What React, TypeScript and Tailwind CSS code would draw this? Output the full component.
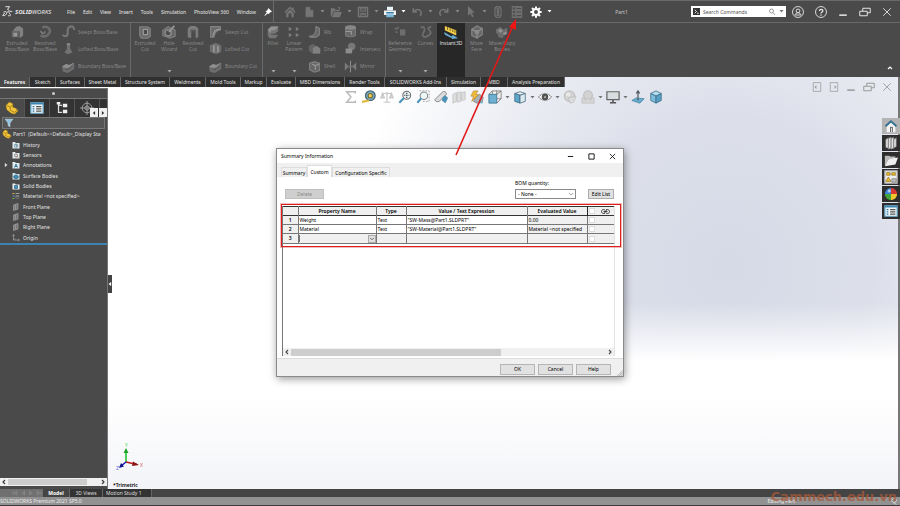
import React from "react";

type IconProps = { className?: string; children?: React.ReactNode };

const Svg = ({ className = "size-3", children }: IconProps) => (
  <svg
    viewBox="0 0 16 16"
    className={`${className} shrink-0`}
    fill="none"
    stroke="currentColor"
    strokeWidth="1.4"
    aria-hidden="true"
  >
    {children}
  </svg>
);

const Caret = ({ className = "text-neutral-500" }: { className?: string }) => (
  <svg viewBox="0 0 5 3" className={`w-[5px] h-[3px] shrink-0 ${className}`} aria-hidden="true">
    <path d="M0.5 0h4L2.5 2.6z" fill="currentColor" />
  </svg>
);

const icons: Record<string, React.ReactNode> = {
  home: (
    <g fill="currentColor" stroke="none">
      <path d="M8 0.500L0.500 8 2 9.300l6-6 6 6L15.500 8 13 5.500V2h-2v1.500z" />
      <path d="M3 9.500 8 4.800l5 4.700V15h-3v-5H6v5H3z" />
    </g>
  ),
  doc: <path d="M3 1h7l4 4v10H3zM10 1v4h4" fill="currentColor" stroke="#4a4a4a" strokeWidth="0.600" />,
  open: (
    <g fill="currentColor" stroke="none">
      <path d="M1 3h5l1 2h6v2H5l-3 7H1z" />
      <path d="M5.500 8H16l-3 7H2.500z" />
      <path d="M10 1l4 1-1 3z" />
    </g>
  ),
  save: (
    <g>
      <path d="M2 2h12v12H2z" strokeWidth="2" />
      <path d="M5 2v5h6V2M5 14v-4h6v4" />
      <path d="M6 11h4M6 4h4" />
    </g>
  ),
  print: (
    <g stroke="none">
      <path d="M4 1h8v5H4z" fill="#e9f4fa" />
      <path d="M0 6h16v6H0z" fill="#f1f1f1" />
      <path d="M3 8h10v2H3z" fill="#2c7fae" />
      <path d="M3 11h10v4H3z" fill="#79b9da" />
    </g>
  ),
  undo: <path d="M3 3v5h5M3.500 7.500C6 4 11 4 13 7c1 2 1 4-1 6" strokeWidth="2" />,
  redo: <path d="M13 3v5H8M12.500 7.500C10 4 5 4 3 7c-1 2-1 4 1 6" strokeWidth="2" />,
  cursor: <path d="M4 0l9 9H9l2.500 5-2 1L7 10l-3 3z" fill="currentColor" stroke="none" />,
  traffic: (
    <g>
      <rect x="4" y="0.800" width="8" height="14.400" rx="3.500" />
      <circle cx="8" cy="4.500" r="1.500" />
      <circle cx="8" cy="8" r="1" />
      <circle cx="8" cy="11.500" r="1.500" />
    </g>
  ),
  list: (
    <g stroke="none">
      <path d="M1 0h14v16H1z" fill="#6e6e6e" />
      <path d="M2.500 2h3v2.500h-3zM2.500 6.700h3v2.500h-3zM2.500 11.500h3V14h-3z" fill="#4d4d4d" />
      <path d="M7.500 2.500h6v1.500h-6zM7.500 7.200h6v1.500h-6zM7.500 12h6v1.500h-6z" fill="#4d4d4d" />
    </g>
  ),
  gear: (
    <g stroke="currentColor">
      <circle cx="8" cy="8" r="4" strokeWidth="2.800" />
      <path
        d="M8 0.500V3M8 13v2.500M0.500 8H3M13 8h2.500M2.700 2.700l1.800 1.800M11.500 11.500l1.800 1.800M13.300 2.700l-1.800 1.800M4.500 11.500l-1.800 1.800"
        strokeWidth="2.600"
      />
    </g>
  ),
  extrude: (
    <g stroke="none">
      <path d="M3 7l4-5 4-1 4 3v8l-4 3V7z" fill="#808080" />
      <path d="M2 7h8v7H2z" fill="#6a6a6a" />
      <path d="M4 9h4v4H4z" fill="#999" />
    </g>
  ),
  revolve: (
    <g>
      <path d="M5 3c6-3 10 2 8 6s-6 5-10 3" strokeWidth="3" stroke="#6c6c6c" />
      <path d="M3 7c2 4 5 3 5 0" stroke="#888" />
    </g>
  ),
  sweep: <path d="M1 12c2 3 6 2 6-2 0-3-1-7 3-8 3-1 5 1 5 4" stroke="#757575" strokeWidth="2.600" />,
  loft: (
    <g stroke="none">
      <path d="M6 2h4v6l3 5-6 2-4-2 3-4z" fill="#727272" />
      <path d="M6 1.500h4V4H6z" fill="#8a8a8a" />
    </g>
  ),
  boundary: (
    <g stroke="none">
      <path d="M0 8l5-3 4 1 6-3v8l-8 5-6-2z" fill="#6e6e6e" />
      <path d="M0 8l5-3 4 1 6-3-6 6-3 1z" fill="#8f8f8f" />
      <path d="M3 11l6-1 4-3v2l-6 4z" fill="#5a5a5a" />
    </g>
  ),
  cut: (
    <g>
      <path d="M2 2h9l3 2v9l-3 2H4l-2-3z" fill="#696969" stroke="#808080" />
      <path d="M6 5h5v6H6z" fill="#4a4a4a" stroke="#999" />
    </g>
  ),
  hole: (
    <g>
      <path d="M1 6l6-4 8 4v7l-6 2-8-3z" fill="#666" stroke="#7c7c7c" />
      <circle cx="7" cy="9" r="3.500" fill="#4c4c4c" stroke="#909090" />
      <path d="M8 8l6-7" stroke="#999" strokeWidth="2" />
    </g>
  ),
  revcut: (
    <g stroke="none">
      <path d="M2 14V4l3-3h6l3 3v10l-3 1V6H6v9z" fill="#7c7c7c" />
      <path d="M5 5h6l-1 8V7H6v6z" fill="#5b5b5b" />
    </g>
  ),
  sweptcut: (
    <g>
      <path d="M2 2h12v4c-5 0-7 3-8 9H2z" fill="#6a6a6a" stroke="#828282" />
      <path d="M5 14c0-6 3-9 9-9" stroke="#999" />
    </g>
  ),
  loftcut: (
    <g stroke="none">
      <path d="M1 4l7-3 7 3v8l-6 3-8-3z" fill="#6e6e6e" />
      <path d="M5 4h2v9H5zM10 5h2v8h-2z" fill="#999" />
    </g>
  ),
  fillet: (
    <g stroke="none">
      <path d="M2 5l4-4h8v6l-4 3H6v1h8l-3 4H4l-2-3z" fill="#757575" />
      <path d="M2 5l4-3h8l-4 4H6L5 9z" fill="#929292" />
    </g>
  ),
  pattern: (
    <g fill="#7c7c7c" stroke="none">
      <path d="M2 2l4 2.500L2 7zM10 2l4 2.500L10 7zM2 9l4 2.500L2 14zM10 9l4 2.500-4 2.500z" />
    </g>
  ),
  rib: <path d="M2 14c6 0 8-4 8-12l4 2v8l-4 3H3z" fill="#666" stroke="#828282" />,
  draft: (
    <g stroke="none">
      <path d="M1 5l5-3 9 6v6H6l-5-3z" fill="#646464" />
      <path d="M6 7l5-2 4 3v6H6z" fill="#808080" />
    </g>
  ),
  shell: (
    <g>
      <path d="M2 4l6-2 6 2v9l-6 2-6-3z" fill="#666" stroke="#828282" />
      <path d="M5 5l4 2v5M9 7l5-2" stroke="#999" />
    </g>
  ),
  wrap: (
    <g>
      <path d="M2 3v10c2 2 10 2 12 0V3" fill="#686868" stroke="#7c7c7c" />
      <ellipse cx="8" cy="3" rx="6" ry="2" fill="#858585" />
      <path d="M2 8h7v4" stroke="#999" />
    </g>
  ),
  intersect: (
    <g stroke="none">
      <circle cx="9.500" cy="5.500" r="4.500" fill="#777" />
      <path d="M2 8h8v6H2z" fill="#8c8c8c" />
    </g>
  ),
  mirror: (
    <g stroke="none">
      <path d="M1 3l5 5-5 5zM15 3l-5 5 5 5z" fill="#7c7c7c" />
      <path d="M7.400 1h1.200v14H7.400z" fill="#909090" />
      <path d="M3 7h10v2H3z" fill="#707070" />
    </g>
  ),
  refgeo: (
    <g fill="#6e6e6e" stroke="none">
      <path d="M8 5h6v7H8z" />
      <path d="M2 3h3v2H2zM3 7h2v2H3zM5 2h2v2H5z" />
    </g>
  ),
  curves: <path d="M2 3c5-3 5 3 3 6s0 6 4 4 6-4 3-7 0-4 2-4" strokeWidth="2" stroke="#6e6e6e" />,
  instant: (
    <g stroke="none">
      <path d="M1 1l13 5v6L1 6z" fill="#f5cf4c" />
      <path d="M4 2.500v3M7 3.700v3M10 5v3M12.500 6v3" stroke="#574719" strokeWidth="0.900" />
      <path d="M0 8l9 5 1-2 6 4-7 1v-1L1 11z" fill="#67acd3" />
    </g>
  ),
  moveface: (
    <g>
      <path d="M2 5l6-4 6 3v7l-6 4-6-3z" fill="#676767" stroke="#828282" />
      <path d="M2 5l6 3 6-4M8 8v7" stroke="#909090" />
      <circle cx="8" cy="8" r="2" fill="#888" />
    </g>
  ),
  movecopy: (
    <g stroke="none">
      <path d="M1 5l5-3 3 3 5-2v5l-4 3-1 4-5-1-1-4-2-1z" fill="#6c6c6c" />
      <path d="M3 6l4-2 2 3-3 2zM9 9l4-2 1 3-4 2z" fill="#8f8f8f" />
    </g>
  ),
  user: (
    <g strokeWidth="1.200">
      <circle cx="8" cy="8" r="7.300" />
      <circle cx="8" cy="6.500" r="2.500" />
      <path d="M4 12c1-4 7-4 8 0z" />
    </g>
  ),
  part: (
    <g>
      <path d="M1 5l4-4 4 2v4l3 1 3 3-4 4-4-1-5-4z" fill="#f2c63c" stroke="#8d6a12" strokeWidth="0.600" />
      <path d="M2 5l4 2v4M6 7l3-3M7 11l4 2 3-3" stroke="#9a7417" strokeWidth="1" />
    </g>
  ),
  property: (
    <g>
      <path d="M1 2h14v12H1z" fill="#f2f6f8" stroke="#6faed0" />
      <path d="M1 3h14" stroke="#3c86b2" strokeWidth="2" />
      <path d="M3 6.500h2M3 9h2M3 11.500h2" stroke="#2b7baa" />
      <path d="M7 6.500h6M7 9h6M7 11.500h6" stroke="#555" />
    </g>
  ),
  config: (
    <g>
      <path d="M4 1v12h4M4 5h4" stroke="#ddd" />
      <path d="M2 1h4v3H2zM9 3h5v4H9zM9 10h5v4H9z" fill="#eee" stroke="none" />
    </g>
  ),
  target: (
    <g stroke="#aaa" strokeWidth="1">
      <circle cx="8" cy="8" r="5.500" />
      <circle cx="8" cy="8" r="2.500" />
      <path d="M8 0v16M0 8h16" />
    </g>
  ),
  funnel: <path d="M2 2h12L9.500 8v6l-3-2V8z" fill="#8fc4e0" stroke="#d9eef8" strokeWidth="0.800" />,
  folder: (
    <g>
      <path d="M1 3h5l1.500 2H15v10H1z" fill="#edf1f3" stroke="none" />
      <path d="M5 7h6v6H5z" fill="#4b91b9" stroke="#24617f" />
    </g>
  ),
  history: (
    <g>
      <path d="M1 2h5l1.500 2H15v11H1z" fill="#e6ebee" stroke="none" />
      <circle cx="8" cy="9.500" r="3.500" fill="#fff" stroke="#397ea5" />
      <path d="M8 7v3h2" stroke="#333" />
    </g>
  ),
  sensors: (
    <g>
      <path d="M1 2h5l1.500 2H15v11H1z" fill="#e6ebee" stroke="none" />
      <circle cx="8" cy="9" r="3" fill="#fff" stroke="#555" />
      <path d="M8 9l4 4" stroke="#b9523c" />
    </g>
  ),
  annot: (
    <g>
      <path d="M1 2h5l1.500 2H15v11H1z" fill="#e6ebee" stroke="none" />
      <path d="M5 13l3-7 3 7M6 11h4" stroke="#246f99" strokeWidth="1.800" />
    </g>
  ),
  surface: (
    <g>
      <path d="M1 2h5l1.500 2H15v11H1z" fill="#c9dfe9" stroke="none" />
      <path d="M3 10c2-5 8-5 10 0-2 4-8 4-10 0z" fill="#438eb8" stroke="#174f6c" />
    </g>
  ),
  material: (
    <g strokeWidth="1.800">
      <path d="M1 3h4" stroke="#e9bc3c" />
      <path d="M1 8h4" stroke="#5aa5d0" />
      <path d="M1 13h4" stroke="#6fbb64" />
      <path d="M7 3h8M7 8h7" stroke="#aaa" />
      <path d="M7 10c2-2 6-2 7 0s-2 4-5 3z" stroke="#999" strokeWidth="1" />
    </g>
  ),
  plane: <path d="M3 4l9-3v11l-9 3zM7 3v10" fill="#777" stroke="#a5a5a5" />,
  origin: (
    <g stroke="#a5a5a5">
      <path d="M3 2v10h11M3 12l3-3" />
      <path d="M1 4l2-3 2 3M12 10l3 2-3 2" />
    </g>
  ),
  sigma: <path d="M13 4V2H3l5 6-5 6h10v-2" stroke="#b9b9b9" strokeWidth="1.600" />,
  measure: (
    <g>
      <circle cx="9.500" cy="6.500" r="5.500" fill="#72aecb" stroke="#46606c" />
      <circle cx="9.500" cy="6.500" r="2.500" fill="#f2d35e" stroke="#7b6b2c" />
      <path d="M0 13.500l8-1.500" stroke="#e0b93f" strokeWidth="2.500" />
    </g>
  ),
  scale: (
    <g stroke="#c7c7c7">
      <path d="M8 2v12M4 14h8M2 4h12" />
      <path d="M1 9l2-5 2 5zM11 9l2-5 2 5z" fill="#d9d9d9" />
    </g>
  ),
  zoomfit: (
    <g>
      <circle cx="10" cy="6" r="4.500" fill="#e9f4f9" stroke="#6c6c6c" strokeWidth="1.200" />
      <path d="M10 3v6M7 6h6" stroke="#444" strokeDasharray="1.500 1" />
      <path d="M6.500 9.500L1.500 14.500" stroke="#4a90b8" strokeWidth="2.400" />
    </g>
  ),
  zoomarea: (
    <g>
      <path d="M4 1h11v12H8" stroke="#999" strokeDasharray="2 1.500" strokeWidth="1" />
      <circle cx="9" cy="6.500" r="4.300" fill="#eef5f8" stroke="#888" strokeWidth="1.200" />
      <path d="M6 9.500L1.500 14.500" stroke="#4a90b8" strokeWidth="2.400" />
    </g>
  ),
  prev: (
    <g>
      <path d="M1 11l9-9c2-1 5 1 4 3l-8 8c-2 1-5 0-5-2z" fill="#dcdcdc" stroke="#777" strokeWidth="1" />
      <path d="M10 8l3-2 3 3-3 6-4-3z" fill="#4a90b8" stroke="none" />
    </g>
  ),
  section: (
    <g fill="#dedede" stroke="#c0c0c0" strokeWidth="0.900">
      <path d="M1 5l4-2v10l-4 2zM6 3l4-1v11l-4 1zM11 3l4-1v9l-4 1z" />
    </g>
  ),
  dynamic: (
    <g>
      <path d="M6 9l5-4 4 3-1 6-6 1-4-2z" fill="#a9b3b8" stroke="#777" strokeWidth="0.800" />
      <path d="M11 9l4 6H9z" fill="#6db0d1" stroke="none" />
      <path d="M4 1h5L6.500 5H10l-8 8 2-6H1z" fill="#f0bc40" stroke="#a87616" strokeWidth="0.600" />
    </g>
  ),
  orient: (
    <g>
      <path d="M5 1h10v9H5z" fill="#eee" stroke="#777" strokeWidth="0.900" />
      <path d="M1 5h9v10H1z" fill="#6db0d1" stroke="#356f8d" strokeWidth="0.900" />
      <path d="M1 5l4-4M10 5l5-4M10 15l5-5M10 1v4" stroke="#666" strokeWidth="0.900" />
    </g>
  ),
  display: (
    <g strokeWidth="0.900" stroke="#426a7e">
      <path d="M2 4l6-2 6 2-6 2z" fill="#f1f1f1" />
      <path d="M2 4l6 2v9l-6-2z" fill="#5da7cc" />
      <path d="M14 4L8 6v9l6-2z" fill="#dceaf1" />
    </g>
  ),
  eye: (
    <g>
      <path d="M0.500 8c4-5 11-5 15 0-4 5-11 5-15 0z" fill="#f5f5f5" stroke="#777" strokeWidth="1" />
      <circle cx="8" cy="8" r="3.200" fill="#555" stroke="#444" strokeWidth="1" />
      <circle cx="8" cy="8" r="1" fill="#ddd" stroke="none" />
    </g>
  ),
  ball: (
    <g>
      <circle cx="7.500" cy="7" r="6" fill="#d3d3d3" stroke="#c0c0c0" />
      <path d="M6 9l9-2-3 7-4 1z" fill="#dcdcdc" stroke="#bbb" strokeWidth="0.800" />
      <circle cx="6" cy="5" r="2.500" fill="#e8e8e8" stroke="none" />
    </g>
  ),
  scene: (
    <g>
      <circle cx="8" cy="6" r="5" fill="#d3d3d3" stroke="#c0c0c0" />
      <path d="M1 15V9h3l1 3 3-3 3 3 1-3h3v6z" fill="#d6d6d6" stroke="#bbb" strokeWidth="0.800" />
    </g>
  ),
  monitor: (
    <g>
      <path d="M1 2h14v9H1z" fill="#d8dde0" stroke="#666" />
      <path d="M8 11v3M4.500 14.500h7" stroke="#555" strokeWidth="1.800" />
    </g>
  ),
  plate: (
    <g>
      <path d="M1 12l5-3 9 1-5 5z" fill="#69aed0" stroke="#3b7c9d" strokeWidth="0.800" />
      <path d="M8 12V2M6 4l2-3 2 3" stroke="#4e5b61" />
    </g>
  ),
  cube: (
    <g stroke="#3a6f8c" strokeWidth="0.900">
      <path d="M2 4l6-3 6 3-6 3z" fill="#b6dbec" />
      <path d="M2 4l6 3v8l-6-3z" fill="#7dbcda" />
      <path d="M14 4L8 7v8l6-3z" fill="#5a9fc3" />
    </g>
  ),
  panehome: (
    <g stroke="none">
      <path d="M3 8l5-4 5 4v7H3z" fill="#f4f4f4" />
      <path d="M8 1L1 7.500 2.500 9 8 4l5.500 5L15 7.500z" fill="#34708f" />
      <path d="M7 9h3v6H7z" fill="#555" />
      <path d="M8 10h1v5H8z" fill="#eee" />
    </g>
  ),
  books: (
    <g stroke="#777" strokeWidth="0.700" fill="#e0e0e0">
      <path d="M2 4l3-2v12l-3-1zM5 3l3-2v13l-3 1zM8 3l3-2v13l-3 1zM11 4l3-2v10l-3 2z" />
    </g>
  ),
  panefolder: (
    <g stroke="none">
      <path d="M1 3h5l1 1h6v3H5l-3 7H1z" fill="#bbb" />
      <path d="M5 7l11-2-3 8-12 2z" fill="#efefef" />
    </g>
  ),
  palette: (
    <g>
      <path d="M1 1h14v14H1z" fill="#eee" stroke="#bbb" />
      <path d="M3 3h4v3H3zM9 3h4v3H9zM5 8l3 5H2z" fill="#e9bb2f" stroke="#85650f" strokeWidth="0.700" />
      <path d="M7 4.500h2M9 10h5v4H9z" fill="#bbb" stroke="#777" strokeWidth="0.800" />
    </g>
  ),
  appearance: (
    <g stroke="none">
      <path d="M8 8V1a7 7 0 0 0-7 7z" fill="#3d80d6" />
      <path d="M8 8V1a7 7 0 0 1 7 7z" fill="#da3833" />
      <path d="M8 8H1a7 7 0 0 0 7 7z" fill="#42a63e" />
      <path d="M8 8h7a7 7 0 0 1-7 7z" fill="#efc62e" />
      <circle cx="6" cy="4.500" r="1.800" fill="#fff" opacity="0.600" />
    </g>
  ),
};

const Icon = ({ name, className }: { name: string; className?: string }) => (
  <Svg className={className}>{icons[name]}</Svg>
);

const menus = ["File", "Edit", "View", "Insert", "Tools", "Simulation", "PhotoView 360", "Window"];

const quickActions = [
  { name: "doc", label: "New" },
  { name: "open", label: "Open" },
  { name: "save", label: "Save" },
  { name: "print", label: "Print", active: true },
  { name: "undo", label: "Undo" },
  { name: "redo", label: "Redo" },
  { name: "cursor", label: "Select" },
];

const tabs = [
  { label: "Features", width: "w-[30px]", active: true },
  { label: "Sketch", width: "w-[26px]" },
  { label: "Surfaces", width: "w-[29px]" },
  { label: "Sheet Metal", width: "w-[36px]" },
  { label: "Structure System", width: "w-[49px]" },
  { label: "Weldments", width: "w-[36px]" },
  { label: "Mold Tools", width: "w-[35px]" },
  { label: "Markup", width: "w-[26px]" },
  { label: "Evaluate", width: "w-[29px]" },
  { label: "MBD Dimensions", width: "w-[49px]" },
  { label: "Render Tools", width: "w-[40px]" },
  { label: "SOLIDWORKS Add-Ins", width: "w-[62px]" },
  { label: "Simulation", width: "w-[34px]" },
  { label: "MBD", width: "w-[27px]" },
  { label: "Analysis Preparation", width: "w-[57px]" },
];

const tree = [
  { label: "History", icon: "history" },
  { label: "Sensors", icon: "sensors" },
  { label: "Annotations", icon: "annot", expandable: true },
  { label: "Surface Bodies", icon: "surface" },
  { label: "Solid Bodies", icon: "folder" },
  { label: "Material <not specified>", icon: "material" },
  { label: "Front Plane", icon: "plane" },
  { label: "Top Plane", icon: "plane" },
  { label: "Right Plane", icon: "plane" },
  { label: "Origin", icon: "origin" },
];

const viewTools = [
  { name: "sigma" },
  { name: "measure" },
  { name: "scale" },
  { name: "zoomfit" },
  { name: "zoomarea" },
  { name: "prev" },
  { name: "section" },
  { name: "dynamic" },
  { name: "orient", menu: true },
  { name: "display", menu: true },
  { name: "eye", menu: true },
  { name: "ball" },
  { name: "scene", menu: true },
  { name: "monitor", menu: true },
  { name: "plate" },
  { name: "cube" },
];

const taskPane = ["panehome", "books", "panefolder", "palette", "appearance", "property"];

const properties = [
  { name: "Weight", type: "Text", value: '"SW-Mass@Part1.SLDPRT"', result: "0.00" },
  { name: "Material", type: "Text", value: '"SW-Material@Part1.SLDPRT"', result: "Material <not specified" },
];

const TitleBar = () => (
  <header className="h-[22px] flex items-center border-t border-[#6a6a6a] text-[#e8e8e8] shrink-0">
    <div className="w-[62px] pl-0.5 flex items-center gap-0.5 text-[6px] italic">
      <Svg className="w-[11px] h-[11px]">
        <path d="M5 1h6L8 5c3 0 3 3-1 4M2 9c4-2 6 0 4 3-1 2-3 2-5 2l3-4M15 8c-4-1-6 1-4 3s2 4-2 3" />
      </Svg>
      <span className="whitespace-nowrap">
        <b>SOLID</b>WORKS
      </span>
    </div>
    <nav className="w-[211px] pl-[5px] flex items-center gap-2">
      {menus.map((menu) => (
        <a key={menu} href="#" className="whitespace-nowrap">
          {menu}
        </a>
      ))}
      <Svg className="size-2 text-white">
        <path d="M9 1l6 6-3 1-3 4-2-2-5 5 4-6-2-2 4-3z" fill="currentColor" />
      </Svg>
    </nav>
    <div className="h-full flex items-center gap-[5px] pl-2.5 border-l border-[#6a6a6a] text-[#757575]">
      <button aria-label="Home" className="mr-0.5">
        <Icon name="home" />
      </button>
      {quickActions.map((action) => (
        <button key={action.name} aria-label={action.label} className="flex items-center gap-[5px]">
          <Icon name={action.name} />
          <Caret className={action.active ? "text-white" : "text-[#8a8a8a]"} />
        </button>
      ))}
      <div className="flex items-center gap-[7px]">
        <button aria-label="Rebuild">
          <Icon name="traffic" />
        </button>
        <button aria-label="File Properties">
          <Icon name="list" />
        </button>
        <button aria-label="Options" className="flex items-center gap-[5px] text-white">
          <Icon name="gear" />
          <Caret className="text-white" />
        </button>
      </div>
    </div>
    <p className="flex-1 text-center text-[#c8c8c8]">Part1</p>
    <label className="w-[95px] h-[11px] bg-white flex items-center gap-[3px] px-0.5 text-neutral-700">
      <Svg className="w-[7px] h-[7px]">
        <path d="M0 0h16v16H0z" fill="#333" stroke="none" />
        <path d="M4 4l4 4-4 4M9 12h4" stroke="#fff" strokeWidth="2" />
      </Svg>
      <input
        aria-label="Search Commands"
        placeholder="Search Commands"
        className="w-0 flex-1 outline-none placeholder:text-neutral-600"
      />
      <Svg className="size-2 text-neutral-500">
        <circle cx="7" cy="6" r="4" />
        <path d="M10 9l4 5" />
      </Svg>
      <Caret />
    </label>
    <div className="flex items-center gap-[11px] pl-1.5 pr-2">
      <button aria-label="Account">
        <Icon name="user" />
      </button>
      <button aria-label="Help">
        <Svg>
          <circle cx="8" cy="8" r="7.300" strokeWidth="1.200" />
          <path d="M6 6.500c0-3 4.500-2.500 4.500 0C10.500 8 8 8 8 10M8 11.200V13" strokeWidth="1.700" />
        </Svg>
      </button>
      <WindowButtons />
    </div>
  </header>
);

const WindowButtons = () => (
  <>
    <button aria-label="Minimize">
      <Svg className="size-2.5">
        <path d="M2 13h12" strokeWidth="2.400" />
      </Svg>
    </button>
    <button aria-label="Restore">
      <Svg>
        <path d="M1 7h10v6H1zM5 7V3h10v6h-4" strokeWidth="1.300" />
      </Svg>
    </button>
    <button aria-label="Close">
      <Svg className="size-2.5">
        <path d="M2 2l12 12M14 2L2 14" />
      </Svg>
    </button>
  </>
);

type ToolProps = { icon: string; lines: string[]; width: string; menu?: boolean; active?: boolean };

const BigTool = ({ icon, lines, width, menu, active }: ToolProps) => (
  <button
    className={`${width} ${
      active ? "bg-[#272727] text-[#e8e8e8]" : "text-[#8c8c8c]"
    } h-full flex flex-col items-center pt-0.5 leading-[6px] shrink-0`}
  >
    <Icon name={icon} className="size-3.5" />
    <span className="pt-px">
      {lines.map((line) => (
        <span key={line} className="block whitespace-nowrap">
          {line}
        </span>
      ))}
    </span>
    {menu && (
      <span className="mt-auto pb-1">
        <Caret className="text-[#aaa]" />
      </span>
    )}
  </button>
);

const SmallTools = ({ items, width }: { items: string[][]; width: string }) => (
  <div className={`${width} h-full pb-0.5 flex flex-col shrink-0 text-[#8c8c8c]`}>
    {items.map(([icon, label]) => (
      <button key={label} className="flex-1 flex items-center gap-[3px] whitespace-nowrap">
        <Icon name={icon} className="w-[13px] h-[13px]" />
        {label}
      </button>
    ))}
  </div>
);

const Ribbon = () => (
  <div className="h-[55px] flex border-t border-[#6a6a6a] shrink-0 font-['Open_Sans',sans-serif]">
    <div className="flex pl-[3px] border-r border-[#6a6a6a]">
      <BigTool icon="extrude" lines={["Extruded", "Boss/Base"]} width="w-[28px]" />
      <BigTool icon="revolve" lines={["Revolved", "Boss/Base"]} width="w-[28px]" />
      <SmallTools
        width="w-[68px] ml-[3px]"
        items={[
          ["sweep", "Swept Boss/Base"],
          ["loft", "Lofted Boss/Base"],
          ["boundary", "Boundary Boss/Base"],
        ]}
      />
    </div>
    <div className="flex pl-0.5 border-r border-[#6a6a6a]">
      <BigTool icon="cut" lines={["Extruded", "Cut"]} width="w-[24px]" />
      <BigTool icon="hole" lines={["Hole", "Wizard"]} width="w-[24px]" menu />
      <BigTool icon="revcut" lines={["Revolved", "Cut"]} width="w-[24px]" />
      <SmallTools
        width="w-[53px] ml-1"
        items={[
          ["sweptcut", "Swept Cut"],
          ["loftcut", "Lofted Cut"],
          ["boundary", "Boundary Cut"],
        ]}
      />
    </div>
    <div className="flex border-r border-[#6a6a6a]">
      <BigTool icon="fillet" lines={["Fillet"]} width="w-[20px]" menu />
      <BigTool icon="pattern" lines={["Linear", "Pattern"]} width="w-[22px]" menu />
      <SmallTools
        width="w-[33px] ml-[3px]"
        items={[
          ["rib", "Rib"],
          ["draft", "Draft"],
          ["shell", "Shell"],
        ]}
      />
      <SmallTools
        width="w-[41px] ml-[3px]"
        items={[
          ["wrap", "Wrap"],
          ["intersect", "Intersect"],
          ["mirror", "Mirror"],
        ]}
      />
    </div>
    <BigTool icon="refgeo" lines={["Reference", "Geometry"]} width="w-[28px]" menu />
    <BigTool icon="curves" lines={["Curves"]} width="w-[23px]" menu />
    <BigTool icon="instant" lines={["Instant3D"]} width="w-[28px]" active />
    <BigTool icon="moveface" lines={["Move", "Face"]} width="w-[23px]" />
    <BigTool icon="movecopy" lines={["Move/Copy", "Bodies"]} width="w-[28px]" />
    <button aria-label="Collapse ribbon" className="ml-auto self-end pr-1.5 pb-[5px] text-white">
      <Svg className="size-2">
        <path d="M4 10l4-4 4 4" strokeWidth="2.400" />
      </Svg>
    </button>
  </div>
);

const FeatureTree = () => (
  <aside className="w-[108px] bg-[#4a4a4a] border-r border-[#777] flex flex-col shrink-0 text-[#e4e4e4] overflow-hidden">
    <div className="h-[11px] border-y border-[#777] flex items-center justify-center">
      <span className="size-[3px] rounded-full bg-[#ccc]" />
    </div>
    <div className="h-[18px] flex bg-[#333] shrink-0">
      {["part", "property", "config", "target"].map((name, index) => (
        <button
          key={name}
          aria-label={name}
          className={`w-[25px] flex items-center justify-center border-r border-[#555] ${
            index === 0 ? "bg-[#4a4a4a]" : ""
          }`}
        >
          <Icon name={name} className="size-3.5" />
        </button>
      ))}
      <div className="ml-auto self-end flex gap-px z-10">
        <button
          aria-label="Previous tab"
          className="w-2 h-[9px] -ml-2.5 bg-[#f0f0f0] text-black flex items-center justify-center"
        >
          <Svg className="size-1">
            <path d="M11 2L5 8l6 6z" fill="currentColor" />
          </Svg>
        </button>
        <button
          aria-label="Next tab"
          className="w-2 h-[9px] bg-[#f0f0f0] text-black flex items-center justify-center"
        >
          <Svg className="size-1">
            <path d="M5 2l6 6-6 6z" fill="currentColor" />
          </Svg>
        </button>
      </div>
    </div>
    <div className="h-3 mx-0.5 border border-[#777] bg-[#555] flex items-center px-px">
      <Icon name="funnel" className="size-2.5" />
    </div>
    <ul className="h-[116px] flex flex-col border-b-2 border-[#3b83b0]">
      <li className="flex-1 flex items-center gap-px pl-0.5 whitespace-nowrap">
        <Icon name="part" className="size-2.5" />
        <span className="w-[94px] overflow-hidden">Part1&nbsp; (Default&lt;&lt;Default&gt;_Display Sta</span>
      </li>
      {tree.map((node) => (
        <li key={node.label} className="flex-1 flex items-center gap-[3px] pl-1 whitespace-nowrap">
          <span className="w-[5px]">
            {node.expandable && (
              <Svg className="size-1">
                <path d="M4 1l9 7-9 7z" fill="currentColor" />
              </Svg>
            )}
          </span>
          <Icon name={node.icon} className="size-2" />
          {node.label}
        </li>
      ))}
    </ul>
    <div className="h-2 mt-auto mb-[3px] bg-[#f0f0f0] flex items-center text-[#333] shrink-0">
      <ArrowGlyph left />
      <span className="h-1.5 w-[79px] bg-[#cdcdcd]" />
      <span className="ml-auto flex">
        <ArrowGlyph />
      </span>
    </div>
  </aside>
);

const ArrowGlyph = ({ left }: { left?: boolean }) => (
  <Svg className="size-2">
    <path d={left ? "M10 4L6 8l4 4" : "M6 4l4 4-4 4"} strokeWidth="2.200" />
  </Svg>
);

const Triad = () => (
  <svg viewBox="0 0 30 34" className="w-[30px] h-[34px]" fill="none" strokeWidth="1.600" aria-hidden="true">
    <path d="M11 19V8" stroke="#1fc42c" />
    <path d="M8.500 10L11 5l2.500 5z" fill="#1fa02b" />
    <path d="M11 19l11 2.500" stroke="#b81d1d" />
    <path d="M18 18.500l6 3.500-7 1z" fill="#8e1414" />
    <path d="M11 19l-5 4" stroke="#1a1ab8" />
    <path d="M4 25l2-5 3 3.500z" fill="#10108c" />
    <g stroke="none" fontSize="5">
      <text x="10" y="4" fill="#39d845">Y</text>
      <text x="25" y="24" fill="#d65c5c">X</text>
      <text x="1" y="27" fill="#5b5bd6">Z</text>
    </g>
  </svg>
);

const Viewport = () => (
  <section className="flex-1 flex flex-col relative">
    <div className="flex justify-center items-center gap-1 pt-0.5">
      {viewTools.map((tool) => (
        <React.Fragment key={tool.name}>
          <button aria-label={tool.name}>
            <Icon name={tool.name} className="size-3.5" />
          </button>
          {tool.menu && (
            <span className="-mx-px">
              <Caret />
            </span>
          )}
        </React.Fragment>
      ))}
    </div>
    <div className="absolute right-1.5 -top-[7px] flex items-center gap-[7px] text-[#999]">
      <button aria-label="Dock left">
        <Svg className="size-2.5">
          <path d="M2 1h12v14H2z" strokeWidth="1.200" />
          <path d="M7 5L4 8l3 3z" fill="currentColor" stroke="none" />
        </Svg>
      </button>
      <button aria-label="Dock right">
        <Svg className="size-2.5">
          <path d="M2 1h12v14H2z" strokeWidth="1.200" />
          <path d="M9 5l3 3-3 3z" fill="currentColor" stroke="none" />
        </Svg>
      </button>
      <WindowButtons />
    </div>
    <div className="absolute left-0 top-[187px] w-1 h-[18px] bg-[#444] text-white flex items-center">
      <Svg className="size-1">
        <path d="M12 1L3 8l9 7z" fill="currentColor" />
      </Svg>
    </div>
    <nav className="absolute -right-0.5 top-[30px] flex flex-col gap-px text-white">
      {taskPane.map((name, index) => (
        <button
          key={name}
          aria-label={name}
          className={`w-[18px] h-4 flex items-center justify-center ${index === 0 ? "bg-[#b4b4b4]" : "bg-[#2e2e2e]"}`}
        >
          <Icon name={name} className="size-3.5" />
        </button>
      ))}
    </nav>
    <div className="mt-auto pl-[5px] text-black">
      <div className="pl-0.5 pb-1">
        <Triad />
      </div>
      <p className="font-semibold leading-[8px]">*Trimetric</p>
    </div>
  </section>
);

const SummaryDialog = () => (
  <div
    role="dialog"
    aria-label="Summary Information"
    className="absolute left-[276px] top-[148px] w-[348px] h-[229px] flex flex-col bg-white border border-[#8a8a8a] shadow-[1px_2px_8px_rgba(0,0,0,0.4)] text-black"
  >
    <div className="h-3.5 flex items-center pl-1 pr-[7px]">
      <h1 className="flex-1">Summary Information</h1>
      <div className="flex items-center gap-3.5">
        <button aria-label="Minimize">
          <Svg className="w-[7px] h-[7px]">
            <path d="M2 8h12" strokeWidth="2" />
          </Svg>
        </button>
        <button aria-label="Maximize">
          <Svg className="w-[7px] h-[7px]">
            <path d="M2 2h12v12H2z" strokeWidth="2" />
          </Svg>
        </button>
        <button aria-label="Close">
          <Svg className="w-[7px] h-[7px]">
            <path d="M2 2l12 12M14 2L2 14" strokeWidth="1.800" />
          </Svg>
        </button>
      </div>
    </div>
    <div role="tablist" className="h-3.5 bg-[#f0f0f0] flex items-end pl-1 whitespace-nowrap">
      <button role="tab" className="w-[26px] h-2.5 border border-b-0 border-[#ddd]">
        Summary
      </button>
      <button role="tab" aria-selected="true" className="w-[25px] h-3 bg-white border border-b-0 border-[#ddd]">
        Custom
      </button>
      <button role="tab" className="w-[58px] h-2.5 border border-b-0 border-[#ddd]">
        Configuration Specific
      </button>
    </div>
    <div className="flex-1 flex flex-col pl-1 pr-2 pb-0.5">
      <div className="h-[22px] flex items-end justify-between pl-1 pr-px">
        <button disabled className="w-[39px] h-2.5 bg-[#cfcfcf] border border-[#bfbfbf] text-[#8a8a8a] leading-[7px]">
          Delete
        </button>
        <div className="flex items-end gap-3">
          <label className="flex flex-col gap-0.5 leading-[7px]">
            BOM quantity:
            <span className="relative block">
              <select className="w-[61px] h-2.5 appearance-none bg-white border border-[#8a8a8a] pl-0.5 leading-[7px]">
                <option>- None -</option>
              </select>
              <Svg className="size-1.5 absolute right-0.5 top-0.5 text-neutral-600">
                <path d="M2 5l6 6 6-6" />
              </Svg>
            </span>
          </label>
          <button className="w-[26px] h-2.5 bg-[#e1e1e1] border border-[#adadad] leading-[7px] whitespace-nowrap">
            Edit List
          </button>
        </div>
      </div>
      <div className="flex-1 flex flex-col ml-px mt-[7px] relative border-l border-[#777] border-r border-r-[#e3e3e3]">
        <table className="w-full table-fixed border-collapse leading-[7px] text-left">
          <colgroup>
            <col className="w-[15px]" />
            <col className="w-[78px]" />
            <col className="w-[30px]" />
            <col className="w-[121px]" />
            <col className="w-[60px]" />
            <col />
          </colgroup>
          <thead>
            <tr className="h-[9px] bg-[#f0f0f0] text-center border-y border-[#333]">
              <th className="border-r border-[#777]" />
              <th className="border-r border-[#777] font-semibold">Property Name</th>
              <th className="border-r border-[#777] font-semibold">Type</th>
              <th className="border-r border-[#777] font-semibold">Value / Text Expression</th>
              <th className="border-r border-[#222] font-semibold">Evaluated Value</th>
              <th>
                <span className="flex items-center justify-between pl-px pr-1">
                  <CheckBox label="Link all" />
                  <svg viewBox="0 0 18 10" className="w-[9px] h-[5px]" fill="none" stroke="#333" strokeWidth="1.800">
                    <path d="M8 2C5 0 1 1 1 5s4 5 7 3M10 2c3-2 7-1 7 3s-4 5-7 3M5 5h8M11 1L7 9" />
                  </svg>
                </span>
              </th>
            </tr>
          </thead>
          <tbody>
            {properties.map((row, index) => (
              <tr key={row.name} className="border-b border-[#777] h-[9px]">
                <th className="bg-[#f0f0f0] border-r border-[#777] text-center font-semibold">{index + 1}</th>
                <td className="border-r border-[#777] pl-px">{row.name}</td>
                <td className="border-r border-[#777] pl-px">{row.type}</td>
                <td className="border-r border-[#777] pl-px">{row.value}</td>
                <td className="border-r border-[#777] pl-px bg-[#f0f0f0] whitespace-nowrap overflow-hidden">
                  {row.result}
                </td>
                <td className="bg-[#f0f0f0] pl-px">
                  <CheckBox label={`Link ${row.name}`} />
                </td>
              </tr>
            ))}
            <tr className="border-b border-[#777] h-[10px] bg-[#f0f0f0]">
              <th className="border-r border-[#777] text-center font-semibold">3</th>
              <td className="border-r border-[#777]">
                <span className="flex items-center">
                  <input
                    aria-label="Property name"
                    className="w-0 flex-1 h-[7px] border-l border-neutral-500 outline-none"
                  />
                  <button aria-label="Show names" className="w-2 h-2 bg-[#e1e1e1] border border-[#aaa]">
                    <Svg className="size-1.5">
                      <path d="M3 5l5 5 5-5" />
                    </Svg>
                  </button>
                </span>
              </td>
              <td className="border-r border-[#777]" />
              <td className="border-r border-[#777]" />
              <td className="border-r border-[#777]" />
              <td className="pl-px">
                <CheckBox label="Link row 3" />
              </td>
            </tr>
          </tbody>
        </table>
        <div className="absolute -left-0.5 -right-[7px] -top-0.5 h-[43px] border border-[#d8201f] ring-1 ring-[#d8201f]/30 pointer-events-none" />
        <div className="mt-auto h-2 bg-[#f0f0f0] flex items-center text-[#444]">
          <ArrowGlyph left />
          <span className="h-[7px] w-[210px] bg-[#cdcdcd]" />
          <span className="ml-auto flex">
            <ArrowGlyph />
          </span>
        </div>
      </div>
    </div>
    <div className="h-[18px] pt-[3px] bg-[#f0f0f0] border-t border-[#ddd] flex items-center justify-end gap-[3px] pr-3 relative">
      {["OK", "Cancel", "Help"].map((label) => (
        <button key={label} className="w-[35px] h-[11px] bg-[#e1e1e1] border border-[#b5b5b5] leading-[8px]">
          {label}
        </button>
      ))}
      <Svg className="size-1.5 absolute right-0 bottom-0 text-neutral-500">
        <path d="M1 16L16 1M6 16L16 6M11 16l5-5" />
      </Svg>
    </div>
  </div>
);

const CheckBox = ({ label }: { label: string }) => (
  <input
    type="checkbox"
    aria-label={label}
    className="appearance-none block w-[6px] h-[6px] bg-white border border-[#ddd]"
  />
);

const Pointer = () => (
  <svg
    viewBox="0 0 70 140"
    className="absolute left-[451px] top-[18px] w-[70px] h-[140px] pointer-events-none"
    aria-hidden="true"
  >
    <path d="M5 137L61 10" stroke="#e01919" strokeWidth="1.600" />
    <path d="M65 1l0 11-7-3z" fill="#ee1515" />
  </svg>
);

const App = () => {
  return (
    <div className="relative h-screen w-full flex flex-col overflow-hidden bg-[#4a4a4a] font-['Noto_Sans',sans-serif] text-[5px] leading-[8px]">
      <TitleBar />
      <Ribbon />
      <main className="flex-1 min-h-0 flex flex-col border-r-2 border-[#777] bg-[linear-gradient(to_bottom,transparent_55%,white_69%,white_78%,#f3f4f8_100%),radial-gradient(ellipse_40%_90%_at_81%_46%,#d6dae6,#dcdfea_40%,#e9ebf2_68%,white_105%)]">
        <div role="tablist" className="flex h-[11px] shrink-0">
          {tabs.map((tab) => (
            <button
              key={tab.label}
              role="tab"
              className={`${tab.width} h-2.5 border-r border-[#666] text-center whitespace-nowrap shrink-0 ${
                tab.active ? "bg-[#4a4a4a] text-white font-semibold" : "bg-[#2f2f2f] text-[#e4e4e4]"
              }`}
            >
              {tab.label}
            </button>
          ))}
        </div>
        <div className="flex-1 min-h-0 flex">
          <FeatureTree />
          <Viewport />
        </div>
      </main>
      <div className="h-2 flex bg-[#444] text-[#ddd] shrink-0">
        <div className="w-[43px] flex items-center justify-end gap-0.5 pr-px text-[#999] bg-[#707070]">
          {["M13 3L6 8l7 5zM3 3v10", "M12 3L5 8l7 5z", "M4 3l7 5-7 5z", "M3 3l7 5-7 5zM13 3v10"].map((d) => (
            <Svg key={d} className="size-1.5">
              <path d={d} />
            </Svg>
          ))}
        </div>
        <button className="w-[27px] border-r border-[#666] font-bold text-white">Model</button>
        <button className="w-[33px] border-r border-[#666] bg-[#333]">3D Views</button>
        <button className="w-[49px] pl-[3px] border-r border-[#666] bg-[#333] text-left">Motion Study 1</button>
      </div>
      <footer className="h-[9px] flex items-center bg-[#929292] border-b border-[#3a3a3a] text-[#eee] shrink-0">
        <span className="flex-1">SOLIDWORKS Premium 2021 SP5.0</span>
        <span className="pr-[95px]">Editing Part</span>
        <Svg className="size-2 mr-0.5">
          <path d="M2 7l6-5 6 5-6 5zM8 12l5 3" />
        </Svg>
      </footer>
      <p className="absolute right-[3px] bottom-[1px] font-['DejaVu_Sans',sans-serif] font-bold text-[13px] leading-[16px] text-[#a4583a]/80">
        Cammech.edu.vn
      </p>
      <SummaryDialog />
      <Pointer />
    </div>
  );
};

export default App;
